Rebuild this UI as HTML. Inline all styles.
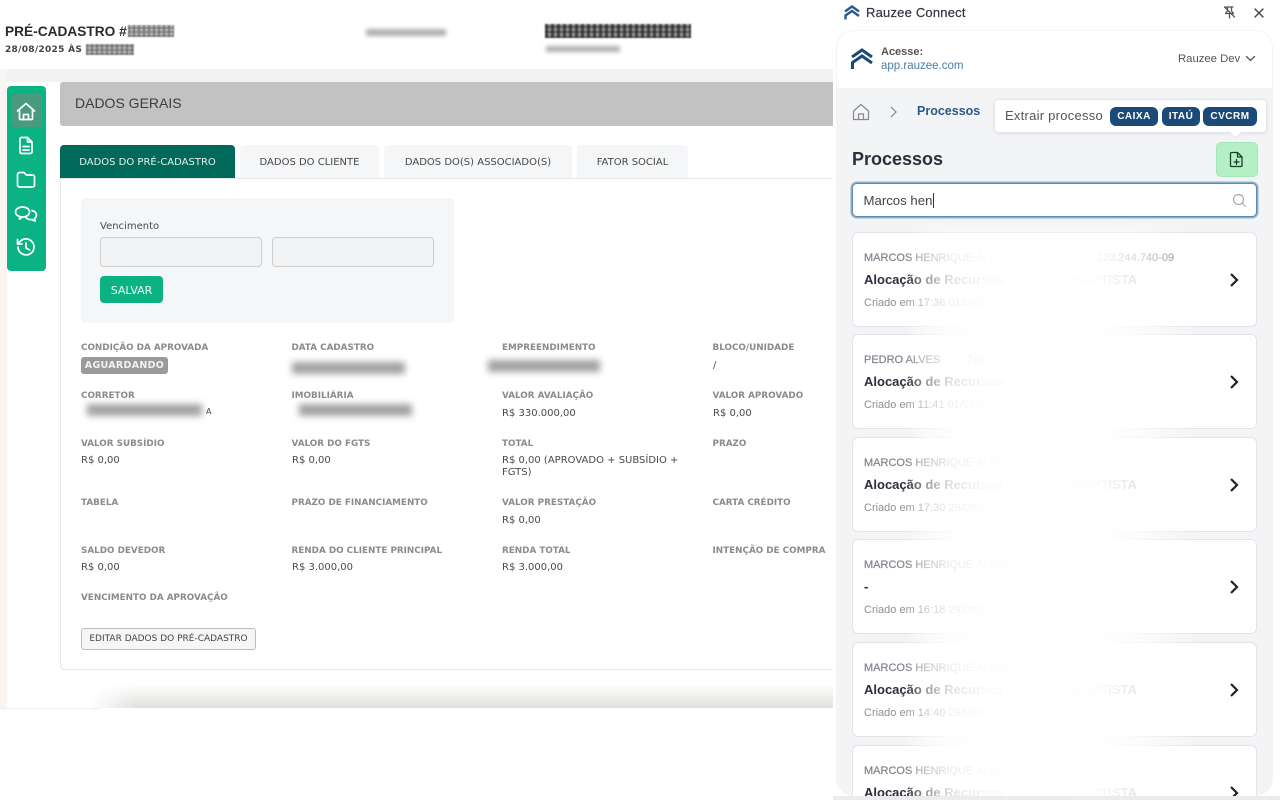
<!DOCTYPE html>
<html lang="pt-BR"><head><meta charset="utf-8"><title>Pré-cadastro</title>
<style>
*{box-sizing:border-box}
html,body{margin:0;padding:0;width:1280px;height:800px;overflow:hidden;background:#fff}
body{position:relative;font-family:"DejaVu Sans",sans-serif;color:#444}
.a{position:absolute;white-space:nowrap}
.blur{position:absolute;background:#a2a2a2;filter:blur(3.500px)}
.px{position:absolute;background:repeating-linear-gradient(90deg,rgba(90,90,90,.55) 0 2px,transparent 2px 5px),repeating-linear-gradient(0deg,rgba(90,90,90,.45) 0 2px,transparent 2px 4px),#b8b8b8;filter:blur(.4px)}
.l{position:absolute;font-size:8.800px;font-weight:700;color:#8b8b8b;white-space:nowrap;line-height:11px}
.v{position:absolute;font-size:10px;color:#4a4a4a;white-space:nowrap;line-height:12px}
.tab{position:absolute;top:145px;height:33px;background:#f5f6f8;border-radius:4px 4px 0 0;font-size:10px;line-height:35px;text-align:center;color:#484848}
.r{font-family:"Liberation Sans",Arial,sans-serif}
.card{position:absolute;left:852px;width:405px;height:95px;background:#fff;border:1px solid #e2e4e8;border-radius:6px}
.card .n{position:absolute;left:11px;top:19px;font-size:11px;color:#7e838c;-webkit-text-stroke:.2px #7e838c;white-space:nowrap;line-height:13px}
.card .t{position:absolute;left:11px;top:39px;font-size:13px;font-weight:700;color:#2a2f3a;white-space:nowrap;line-height:15px}
.card .t span{position:absolute;left:209px;color:#a4a8af}
.card .c{position:absolute;left:11px;top:64px;font-size:11px;color:#8f8f8f;white-space:nowrap;line-height:13px}
.card svg{position:absolute;left:375px;top:38px}
.pill{position:absolute;top:107px;height:19px;background:#1b4a78;color:#fff;border-radius:6px;font-size:10px;font-weight:700;line-height:19px;text-align:center;letter-spacing:.5px}
</style></head><body>

<!-- page header -->
<div class="a r" style="left:5px;top:23px;font-size:13.700px;font-weight:700;color:#2b2b2b;line-height:17px">PRÉ-CADASTRO #</div>
<div class="px" style="left:128px;top:25px;width:46px;height:12px"></div>
<div class="a" style="left:5px;top:44px;font-size:9px;font-weight:700;color:#444;line-height:12px;letter-spacing:.3px">28/08/2025 ÀS</div>
<div class="px" style="left:86px;top:44px;width:48px;height:11px"></div>
<div class="blur" style="left:366px;top:29px;width:80px;height:7px;filter:blur(2px);background:#b0b0b0"></div>
<div class="px" style="left:545px;top:24px;width:146px;height:14px;background:repeating-linear-gradient(90deg,rgba(30,30,30,.7) 0 3px,transparent 3px 6px),repeating-linear-gradient(0deg,rgba(30,30,30,.5) 0 2px,transparent 2px 5px),#999;filter:blur(.7px)"></div>
<div class="blur" style="left:546px;top:46px;width:74px;height:6px;filter:blur(2px);background:#b0b0b0"></div>

<!-- main background -->
<div class="a" style="left:0;top:69px;width:833px;height:13px;background:#f2f2f2"></div>
<div class="a" style="left:0;top:69px;width:7px;height:639px;background:#f8f5f2"></div>

<!-- sidebar -->
<div class="a" style="left:7px;top:86px;width:39px;height:185px;background:#0bb384;border-radius:4px"></div>
<div class="a" style="left:11px;top:94px;width:31px;height:33px;background:#4a9a80;border-radius:4px"></div>
<svg class="a" style="left:7px;top:86px" width="39" height="185" fill="none" stroke="#fff" stroke-width="1.700" stroke-linecap="round" stroke-linejoin="round">
<path d="M10.500 25 19 17.500 27.500 25M12.500 23v9.500a1 1 0 0 0 1 1h11a1 1 0 0 0 1-1V23"/><path d="M16.500 33.500V28.500h5v5"/>
<path d="M14.500 51.500h6l4.500 4.500v10a1.500 1.500 0 0 1-1.500 1.500h-9A1.500 1.500 0 0 1 13 66V53a1.500 1.500 0 0 1 1.500-1.500Z"/><path d="M20.500 51.500V56H25M16 60.500h6M16 64h6"/>
<path d="M11 88a2 2 0 0 1 2-2h4.500l2.500 2.500h6a2 2 0 0 1 2 2v8a2 2 0 0 1-2 2H13a2 2 0 0 1-2-2Z" transform="translate(-.5 .5)"/>
<path d="M15.500 131c-4 0-7-2.200-7-5s3-5 7-5 7 2.200 7 5-3 5-7 5l-3 2 .3-2.700"/>
<path d="M25 124.500c2.700.7 4.500 2.500 4.500 4.500 0 1.400-.7 2.500-1.900 3.400l.6 2.800-3.200-1.700c-2.300.3-4.500-.3-5.900-1.800"/>
<path d="M11 161a8 8 0 1 0 2.300-5.700L10.500 158M10.500 153.500v4.500h4.500"/><path d="M19 157v5l3.500 2"/>
</svg>

<!-- section bar -->
<div class="a" style="left:60px;top:82px;width:773px;height:43.500px;background:#c2c2c2;border-radius:3px 0 0 3px"></div>
<div class="a r" style="left:75px;top:95px;font-size:14px;color:#3d3d3d;line-height:17px">DADOS GERAIS</div>

<!-- tabs -->
<div class="a" style="left:60px;top:178px;width:773px;height:492px;background:#fff;border:1px solid #e8e8e8;border-right:0;border-radius:0 0 0 4px"></div>
<div class="tab" style="left:60px;width:175px;background:#00695a;color:#e4f0ec">DADOS DO PRÉ-CADASTRO</div>
<div class="tab" style="left:240px;width:139px">DADOS DO CLIENTE</div>
<div class="tab" style="left:384px;width:188px">DADOS DO(S) ASSOCIADO(S)</div>
<div class="tab" style="left:577px;width:111px">FATOR SOCIAL</div>

<!-- form -->
<div class="a" style="left:81px;top:198px;width:373px;height:125px;background:#f4f6f8;border-radius:4px"></div>
<div class="a" style="left:100px;top:220px;font-size:10px;color:#4a4a4a;line-height:14px">Vencimento</div>
<div class="a" style="left:100px;top:237px;width:162px;height:30px;background:#f2f3f4;border:1px solid #cfcfcf;border-radius:4px"></div>
<div class="a" style="left:272px;top:237px;width:162px;height:30px;background:#f2f3f4;border:1px solid #cfcfcf;border-radius:4px"></div>
<div class="a" style="left:100px;top:276px;width:63px;height:27px;background:#0db283;border-radius:4px;color:#eefaf6;font-size:11px;text-align:center;line-height:29px">SALVAR</div>

<!-- data -->
<div class="l" style="left:81px;top:343px">CONDIÇÃO DA APROVADA</div>
<div class="a" style="left:81px;top:357px;width:87px;height:17px;background:#9a9a9a;border-radius:3px;color:#f2f2f2;font-size:9.500px;font-weight:700;text-align:center;line-height:17px;letter-spacing:.3px">AGUARDANDO</div>
<div class="l" style="left:291.500px;top:343px">DATA CADASTRO</div>
<div class="blur" style="left:292px;top:362px;width:113px;height:12px"></div>
<div class="l" style="left:502px;top:343px">EMPREENDIMENTO</div>
<div class="blur" style="left:488px;top:360px;width:112px;height:12px"></div>
<div class="l" style="left:712.500px;top:343px">BLOCO/UNIDADE</div>
<div class="v" style="left:713px;top:360px">/</div>

<div class="l" style="left:81px;top:391px">CORRETOR</div>
<div class="blur" style="left:87px;top:404px;width:115px;height:12px"></div>
<div class="v" style="left:206px;top:406px;font-size:8px">A</div>
<div class="l" style="left:291.500px;top:391px">IMOBILIÁRIA</div>
<div class="blur" style="left:299px;top:404px;width:113px;height:12px"></div>
<div class="l" style="left:502px;top:391px">VALOR AVALIAÇÃO</div>
<div class="v" style="left:502px;top:408px">R$ 330.000,00</div>
<div class="l" style="left:712.500px;top:391px">VALOR APROVADO</div>
<div class="v" style="left:713px;top:408px">R$ 0,00</div>

<div class="l" style="left:81px;top:439px">VALOR SUBSÍDIO</div>
<div class="v" style="left:81px;top:455px">R$ 0,00</div>
<div class="l" style="left:291.500px;top:439px">VALOR DO FGTS</div>
<div class="v" style="left:292px;top:455px">R$ 0,00</div>
<div class="l" style="left:502px;top:439px">TOTAL</div>
<div class="v" style="left:502px;top:455px">R$ 0,00 (APROVADO + SUBSÍDIO +<br>FGTS)</div>
<div class="l" style="left:712.500px;top:439px">PRAZO</div>

<div class="l" style="left:81px;top:498px">TABELA</div>
<div class="l" style="left:291.500px;top:498px">PRAZO DE FINANCIAMENTO</div>
<div class="l" style="left:502px;top:498px">VALOR PRESTAÇÃO</div>
<div class="v" style="left:502px;top:515px">R$ 0,00</div>
<div class="l" style="left:712.500px;top:498px">CARTA CRÉDITO</div>

<div class="l" style="left:81px;top:546px">SALDO DEVEDOR</div>
<div class="v" style="left:81px;top:562px">R$ 0,00</div>
<div class="l" style="left:291.500px;top:546px">RENDA DO CLIENTE PRINCIPAL</div>
<div class="v" style="left:292px;top:562px">R$ 3.000,00</div>
<div class="l" style="left:502px;top:546px">RENDA TOTAL</div>
<div class="v" style="left:502px;top:562px">R$ 3.000,00</div>
<div class="l" style="left:712.500px;top:546px">INTENÇÃO DE COMPRA</div>

<div class="l" style="left:81px;top:593px">VENCIMENTO DA APROVAÇÃO</div>
<div class="a" style="left:81px;top:628px;width:175px;height:22px;background:#f6f6f6;border:1px solid #bdbdbd;border-radius:3px;font-size:9px;text-align:center;line-height:20px;color:#444">EDITAR DADOS DO PRÉ-CADASTRO</div>

<!-- bottom shade -->
<div class="a" style="left:60px;top:684px;width:773px;height:24px;background:linear-gradient(180deg,rgba(225,225,222,0),#e0e0dd);-webkit-mask-image:linear-gradient(90deg,transparent 0,transparent 30px,#000 75px);mask-image:linear-gradient(90deg,transparent 0,transparent 30px,#000 75px)"></div>
<div class="a" style="left:0;top:708px;width:100px;height:1px;background:#eeeeec"></div>

<!-- extension window -->
<div class="a" style="left:833px;top:0;width:447px;height:800px;background:#fff"></div>
<svg class="a" style="left:843px;top:4px" width="18" height="17" viewBox="0 0 18 17" fill="none" stroke="#2a5a88" stroke-width="2.400">
<path d="M2 7.500 9 2.500l7 5"/><path d="M2.500 15.500V11.500L9 7l7 5"/></svg>
<div class="a r" style="left:866px;top:5px;font-size:13px;font-weight:400;color:#2f3540;line-height:16px;letter-spacing:.2px;-webkit-text-stroke:.2px #2f3540">Rauzee Connect</div>
<svg class="a" style="left:1222px;top:5px" width="15" height="15" viewBox="0 0 15 15" fill="none" stroke="#555" stroke-width="1.300" stroke-linecap="round" stroke-linejoin="round">
<path d="M4 2h7M5.500 2v4L3.500 8.500h8L9.500 6V2M7.500 8.500V13M2.500 2l10 10"/></svg>
<svg class="a" style="left:1253px;top:7px" width="12" height="12" viewBox="0 0 12 12" fill="none" stroke="#444" stroke-width="1.400" stroke-linecap="round"><path d="M2 2l8 8M10 2l-8 8"/></svg>

<div class="a" style="left:836px;top:30px;width:437px;height:766px;background:#f3f4f6;border:1px solid #f2f3f5;border-top-color:#f4f5f7;border-radius:18px;overflow:hidden">
  <div style="position:absolute;left:0;top:0;width:100%;height:57px;background:#fff"></div>
</div>
<div class="a" style="left:833px;top:796px;width:447px;height:4px;background:#ececec"></div>

<svg class="a" style="left:850px;top:47px" width="24" height="24" viewBox="0 0 24 24" fill="none" stroke="#1c4a78" stroke-width="3">
<path d="M2 10 12 3l10 7"/><path d="M2.500 22v-6.500L12 9l10 7"/></svg>
<div class="a r" style="left:881px;top:45px;font-size:11px;font-weight:700;color:#555;line-height:14px">Acesse:</div>
<div class="a r" style="left:881px;top:59px;font-size:11.500px;color:#4c7ca8;line-height:15px">app.rauzee.com</div>
<div class="a r" style="left:1178px;top:52px;font-size:11.300px;color:#555;line-height:14px">Rauzee Dev</div>
<svg class="a" style="left:1245px;top:55px" width="11" height="8" fill="none" stroke="#555" stroke-width="1.300" stroke-linecap="round"><path d="M1.500 1.500 5.500 5.500 9.500 1.500"/></svg>

<svg class="a" style="left:852px;top:103px" width="18" height="18" viewBox="0 0 18 18" fill="none" stroke="#888" stroke-width="1.200" stroke-linejoin="round">
<path d="M1.500 8 9 1.500 16.500 8v8.500h-15Z"/><path d="M6.500 16.500V11h5v5.500"/></svg>
<svg class="a" style="left:889px;top:105px" width="9" height="14" fill="none" stroke="#888" stroke-width="1.200"><path d="M2 2l5 5-5 5"/></svg>
<div class="a r" style="left:917px;top:104px;font-size:12.500px;font-weight:700;color:#2a5a88;line-height:15px">Processos</div>

<div class="a" style="left:994px;top:99px;width:273px;height:34px;background:#fff;border:1px solid #e4e6ea;border-radius:4px;box-shadow:0 1px 3px rgba(0,0,0,.08)"></div>
<div class="a" style="left:1231px;top:128px;width:9px;height:9px;background:#fff;transform:rotate(45deg);border-right:1px solid #e4e6ea;border-bottom:1px solid #e4e6ea"></div>
<div class="a r" style="left:1005px;top:108px;font-size:13px;color:#555;line-height:16px;letter-spacing:.25px">Extrair processo</div>
<div class="pill r" style="left:1110px;width:48px">CAIXA</div>
<div class="pill r" style="left:1162px;width:38px">ITAÚ</div>
<div class="pill r" style="left:1203px;width:54px">CVCRM</div>

<div class="a r" style="left:852px;top:148px;font-size:18px;font-weight:700;color:#2a2f3a;line-height:22px">Processos</div>
<div class="a" style="left:1216px;top:142px;width:42px;height:35px;background:#b4efc6;border:1px solid #a4e6b8;border-radius:5px"></div>
<svg class="a" style="left:1229px;top:151px" width="15" height="17" viewBox="0 0 15 17" fill="none" stroke="#17402a" stroke-width="1.300" stroke-linecap="round" stroke-linejoin="round">
<path d="M2.500 1.500h6l4.500 4.500v8.500a1 1 0 0 1-1 1h-9.500a1 1 0 0 1-1-1V2.500a1 1 0 0 1 1-1Z"/><path d="M8.500 1.500V6H13M7.500 8.500v5M5 11h5"/></svg>

<div class="a" style="left:852px;top:183px;width:405px;height:34px;background:#fff;border:1px solid #5f88ad;border-radius:5px;box-shadow:0 0 0 1.500px #8fb0cc"></div>
<div class="a r" style="left:863.500px;top:192px;font-size:13.200px;color:#444;line-height:17px">Marcos hen</div>
<div class="a" style="left:933px;top:193px;width:1px;height:15px;background:#333"></div>
<svg class="a" style="left:1232px;top:193px" width="15" height="15" fill="none" stroke="#aaa" stroke-width="1.200" stroke-linecap="round"><circle cx="6.500" cy="6.500" r="5"/><path d="M10.500 10.500 13.500 13.500"/></svg>

<!-- cards -->
<div class="card r" style="top:232px"><div class="n">MARCOS HENRIQUE ALVES<span style="position:absolute;left:233px">123.244.740-09</span></div><div class="t">Alocação de Recursos<span>BAPTISTA</span></div><div class="c">Criado em 17:36 01/09/2025</div><svg width="12" height="18" fill="none" stroke="#222" stroke-width="2.200"><path d="M3 3l6 6-6 6"/></svg></div>
<div class="card r" style="top:334px"><div class="n">PEDRO ALVES<span style="position:absolute;left:96px">· 740</span></div><div class="t">Alocação de Recursos</div><div class="c">Criado em 11:41 01/09/2025</div><svg width="12" height="18" fill="none" stroke="#222" stroke-width="2.200"><path d="M3 3l6 6-6 6"/></svg></div>
<div class="card r" style="top:437px"><div class="n">MARCOS HENRIQUE ALVES</div><div class="t">Alocação de Recursos<span>BAPTISTA</span></div><div class="c">Criado em 17:30 29/08/2025</div><svg width="12" height="18" fill="none" stroke="#222" stroke-width="2.200"><path d="M3 3l6 6-6 6"/></svg></div>
<div class="card r" style="top:539px"><div class="n">MARCOS HENRIQUE ALVES</div><div class="t">-</div><div class="c">Criado em 16:18 29/08/2025</div><svg width="12" height="18" fill="none" stroke="#222" stroke-width="2.200"><path d="M3 3l6 6-6 6"/></svg></div>
<div class="card r" style="top:642px"><div class="n">MARCOS HENRIQUE ALVES</div><div class="t">Alocação de Recursos<span>BAPTISTA</span></div><div class="c">Criado em 14:40 29/08/2025</div><svg width="12" height="18" fill="none" stroke="#222" stroke-width="2.200"><path d="M3 3l6 6-6 6"/></svg></div>
<div class="a" style="left:836px;top:745px;width:437px;height:51px;overflow:hidden;border-radius:0 0 18px 18px">
<div class="card r" style="left:16px;top:0"><div class="n">MARCOS HENRIQUE ALVES</div><div class="t">Alocação de Recursos<span>BAPTISTA</span></div><svg width="12" height="18" fill="none" stroke="#222" stroke-width="2.200"><path d="M3 3l6 6-6 6"/></svg></div></div>

<!-- white veil -->
<div class="a" style="left:905px;top:218px;width:295px;height:578px;background:linear-gradient(90deg,rgba(255,255,255,0) 0,rgba(255,255,255,.5) 20px,rgba(255,255,255,.85) 45px,rgba(255,255,255,.97) 80px,rgba(255,255,255,.97) 190px,rgba(255,255,255,.7) 235px,rgba(255,255,255,0) 295px);-webkit-mask-image:linear-gradient(180deg,transparent 0,#000 30px);mask-image:linear-gradient(180deg,transparent 0,#000 30px)"></div>

</body></html>
